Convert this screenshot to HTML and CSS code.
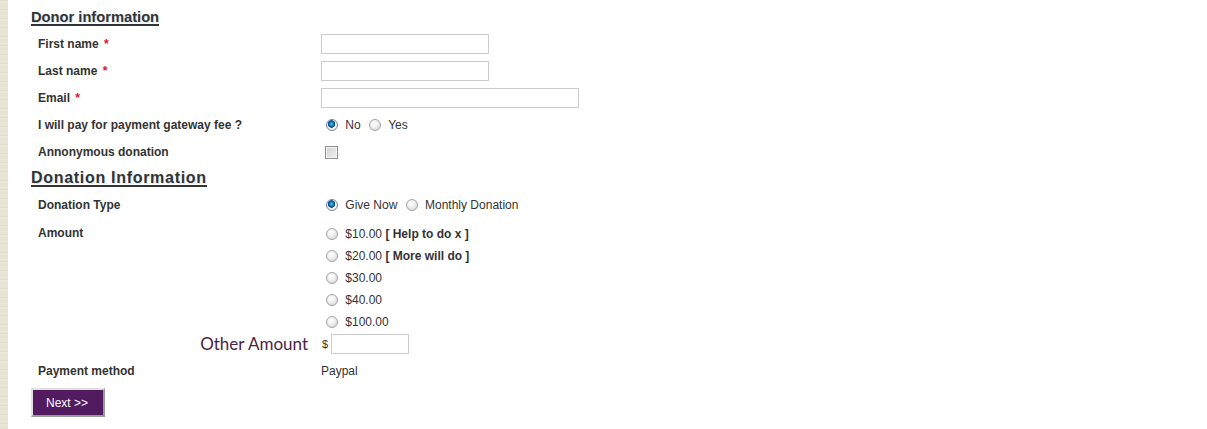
FILE: index.html
```html
<!DOCTYPE html>
<html lang="en">
<head>
  <meta charset="UTF-8" />
  <title>Donation</title>
  <link rel="stylesheet" href="styles.css">
</head>
<body>
  <div class="page">
    <form class="donation-form">
      <!-- Donor -->
      <h2 class="section-title">Donor information</h2>
      <div class="field">
        <label class="field-label">First name <span class="req">*</span></label>
        <div class="field-value"><input type="text" class="text-input"></div>
      </div>
      <div class="field">
        <label class="field-label">Last name <span class="req">*</span></label>
        <div class="field-value"><input type="text" class="text-input"></div>
      </div>
      <div class="field">
        <label class="field-label">Email <span class="req">*</span></label>
        <div class="field-value"><input type="text" class="text-input wide"></div>
      </div>
      <div class="field">
        <label class="field-label">I will pay for payment gateway fee ?</label>
        <div class="field-value"><input type="radio" name="fee" checked> No <input type="radio" name="fee"> Yes</div>
      </div>
      <div class="field">
        <label class="field-label">Annonymous donation</label>
        <div class="field-value"><input type="checkbox"></div>
      </div>

      <!-- Donation -->
      <h2 class="section-title big">Donation Information</h2>
      <div class="field">
        <label class="field-label">Donation Type</label>
        <div class="field-value"><input type="radio" name="type" checked> Give Now <input type="radio" name="type"> Monthly Donation</div>
      </div>
      <div class="field top">
        <label class="field-label amount-label">Amount</label>
        <div class="field-value amount-list">
          <div class="amount"><input type="radio" name="amount"> $10.00 <b>[ Help to do x ]</b></div>
          <div class="amount"><input type="radio" name="amount"> $20.00 <b>[ More will do ]</b></div>
          <div class="amount"><input type="radio" name="amount"> $30.00</div>
          <div class="amount"><input type="radio" name="amount"> $40.00</div>
          <div class="amount"><input type="radio" name="amount"> $100.00</div>
        </div>
      </div>
      <div class="field other">
        <label class="field-label other-label">Other Amount</label>
        <div class="field-value"><span class="currency">$</span><input type="text" class="text-input small"></div>
      </div>
      <div class="field pay">
        <label class="field-label">Payment method</label>
        <div class="field-value">Paypal</div>
      </div>

      <button type="button" class="next-btn">Next &gt;&gt;</button>
    </form>
  </div>
</body>
</html>
```

FILE: styles.css
```css
* {
  box-sizing: border-box;
}
body {
  margin: 0;
  font-family: 'Liberation Sans', Arial, sans-serif;
  font-size: 12px;
  color: #333;
  background:
    linear-gradient(to right, transparent 8px, #fff 8px),
    repeating-linear-gradient(0deg, #e7e2d4 0 3px, #ebe6da 3px 5px, #e2dccd 5px 6px, #e9e4d7 6px 9px),
    #e8e3d6;
  height: 429px;
  overflow: hidden;
}
.page {
  padding-left: 8px;
}

/* Form */
.donation-form {
  padding: 10px 0 0 23px;
}
.section-title {
  display: inline-block;
  margin: 0 0 4px;
  font-size: 14.7px;
  line-height: 14px;
  font-weight: bold;
  color: #333;
  border-bottom: 2px solid #333;
  text-shadow: 1px 1px 1px #d4e6f5;
}
.section-title.big {
  margin-top: 5px;
  font-size: 16px;
  line-height: 15px;
  letter-spacing: 0.7px;
}
.field {
  display: grid;
  grid-template-columns: 283px 1fr;
  align-items: center;
  height: 27px;
  padding-left: 7px;
}
.field-label {
  font-weight: bold;
}
.req {
  color: #e0102a;
  margin-left: 2px;
}
.field-value {
  white-space: nowrap;
  line-height: 20px;
}

.text-input {
  width: 168px;
  height: 20px;
  border: 1px solid #ccc;
  padding: 0 3px;
  font: inherit;
  margin: 0;
  vertical-align: middle;
}
.text-input.wide {
  width: 258px;
}
.text-input.small {
  width: 78px;
}

/* Radios and checkbox */
input[type="radio"] {
  appearance: none;
  width: 12px;
  height: 12px;
  margin: 0 4px 0 5px;
  vertical-align: -2px;
  border-radius: 50%;
  border: 1px solid #a4a4a4;
  background: radial-gradient(circle at 40% 35%, #fff 0, #f0f0f0 40%, #cfcfcf 100%);
}
input[type="radio"]:checked {
  background:
    radial-gradient(circle at 45% 40%, #5cc2f5 0, #1777be 2px, #0b4c84 3.5px, transparent 4px),
    radial-gradient(circle, #fff 0, #eee 60%, #cfcfcf 100%);
  border-color: #7a8a99;
}
input[type="checkbox"] {
  appearance: none;
  width: 13px;
  height: 13px;
  margin: 0 0 0 4px;
  vertical-align: middle;
  border: 1px solid #8f8f8f;
  background: linear-gradient(135deg, #d0d0d0, #f2f2f2);
  box-shadow: inset 0 0 0 1px #f4f4f4;
}

/* Amount */
.field.top {
  align-items: start;
  height: auto;
}
.amount-label {
  padding-top: 8px;
}
.amount-list {
  padding-top: 5px;
}
.amount {
  height: 22px;
  line-height: 22px;
}
.amount b {
  font-weight: bold;
}

.field.other {
  height: 22px;
}
.other-label {
  font-family: Lato, 'Open Sans', sans-serif;
  font-weight: normal;
  font-size: 17px;
  line-height: 22px;
  color: #4b2346;
  text-align: right;
  padding-right: 13px;
}
.currency {
  font-size: 11px;
  margin: 0 3px 0 1px;
  vertical-align: middle;
}

.field.pay {
  height: 30px;
}
.field.pay .field-label,
.field.pay .field-value {
  padding-top: 2px;
}

.next-btn {
  margin-top: 3px;
  width: 74px;
  height: 29px;
  background: #521a5f;
  color: #fff;
  font-family: 'Liberation Sans', Arial, sans-serif;
  font-size: 12px;
  border: 2px solid;
  border-color: #e0e0e0 #9a9a9a #9a9a9a #e0e0e0;
  padding: 0 2px 0 0;
  text-align: center;
}
```
